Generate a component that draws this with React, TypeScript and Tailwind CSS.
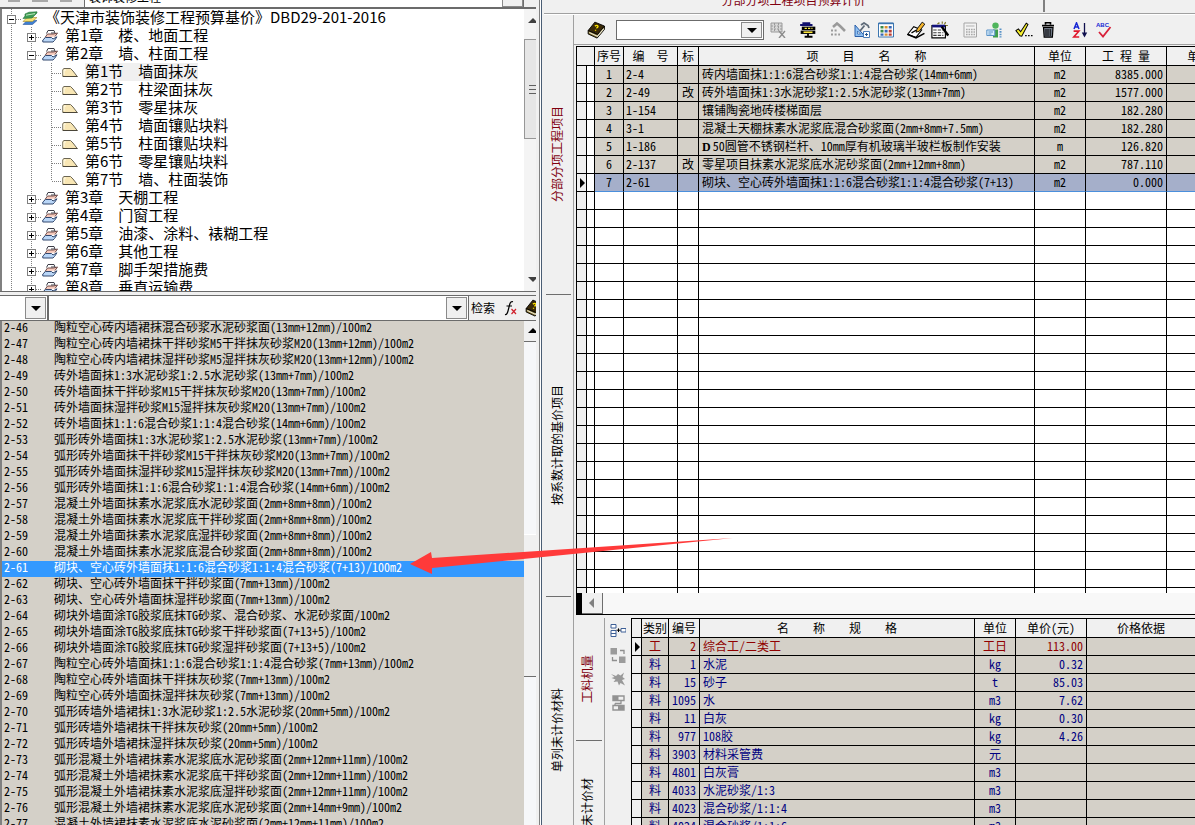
import type { ReactNode } from 'react'

type TreeNode = {
  level: 0 | 1 | 2
  label: string
  open?: boolean
  selected?: boolean
  last?: boolean
}

const tree: TreeNode[] = [
  { level: 0, label: '《天津市装饰装修工程预算基价》DBD29-201-2016', open: true },
  { level: 1, label: '第1章　楼、地面工程' },
  { level: 1, label: '第2章　墙、柱面工程', open: true },
  { level: 2, label: '第1节　墙面抹灰', selected: true },
  { level: 2, label: '第2节　柱梁面抹灰' },
  { level: 2, label: '第3节　零星抹灰' },
  { level: 2, label: '第4节　墙面镶贴块料' },
  { level: 2, label: '第5节　柱面镶贴块料' },
  { level: 2, label: '第6节　零星镶贴块料' },
  { level: 2, label: '第7节　墙、柱面装饰', last: true },
  { level: 1, label: '第3章　天棚工程' },
  { level: 1, label: '第4章　门窗工程' },
  { level: 1, label: '第5章　油漆、涂料、裱糊工程' },
  { level: 1, label: '第6章　其他工程' },
  { level: 1, label: '第7章　脚手架措施费' },
  { level: 1, label: '第8章　垂直运输费' },
]

const quotas: [string, string][] = [
  ['2-46', '陶粒空心砖内墙裙抹混合砂浆水泥砂浆面(13mm+12mm)/100m2'],
  ['2-47', '陶粒空心砖内墙裙抹干拌砂浆M5干拌抹灰砂浆M20(13mm+12mm)/100m2'],
  ['2-48', '陶粒空心砖内墙裙抹湿拌砂浆M5湿拌抹灰砂浆M20(13mm+12mm)/100m2'],
  ['2-49', '砖外墙面抹1:3水泥砂浆1:2.5水泥砂浆(13mm+7mm)/100m2'],
  ['2-50', '砖外墙面抹干拌砂浆M15干拌抹灰砂浆M20(13mm+7mm)/100m2'],
  ['2-51', '砖外墙面抹湿拌砂浆M15湿拌抹灰砂浆M20(13mm+7mm)/100m2'],
  ['2-52', '砖外墙面抹1:1:6混合砂浆1:1:4混合砂浆(14mm+6mm)/100m2'],
  ['2-53', '弧形砖外墙面抹1:3水泥砂浆1:2.5水泥砂浆(13mm+7mm)/100m2'],
  ['2-54', '弧形砖外墙面抹干拌砂浆M15干拌抹灰砂浆M20(13mm+7mm)/100m2'],
  ['2-55', '弧形砖外墙面抹湿拌砂浆M15湿拌抹灰砂浆M20(13mm+7mm)/100m2'],
  ['2-56', '弧形砖外墙面抹1:1:6混合砂浆1:1:4混合砂浆(14mm+6mm)/100m2'],
  ['2-57', '混凝土外墙面抹素水泥浆底水泥砂浆面(2mm+8mm+8mm)/100m2'],
  ['2-58', '混凝土外墙面抹素水泥浆底干拌砂浆面(2mm+8mm+8mm)/100m2'],
  ['2-59', '混凝土外墙面抹素水泥浆底湿拌砂浆面(2mm+8mm+8mm)/100m2'],
  ['2-60', '混凝土外墙面抹素水泥浆底混合砂浆面(2mm+8mm+8mm)/100m2'],
  ['2-61', '砌块、空心砖外墙面抹1:1:6混合砂浆1:1:4混合砂浆(7+13)/100m2'],
  ['2-62', '砌块、空心砖外墙面抹干拌砂浆面(7mm+13mm)/100m2'],
  ['2-63', '砌块、空心砖外墙面抹湿拌砂浆面(7mm+13mm)/100m2'],
  ['2-64', '砌块外墙面涂TG胶浆底抹TG砂浆、混合砂浆、水泥砂浆面/100m2'],
  ['2-65', '砌块外墙面涂TG胶浆底抹TG砂浆干拌砂浆面(7+13+5)/100m2'],
  ['2-66', '砌块外墙面涂TG胶浆底抹TG砂浆湿拌砂浆面(7+13+5)/100m2'],
  ['2-67', '陶粒空心砖外墙面抹1:1:6混合砂浆1:1:4混合砂浆(7mm+13mm)/100m2'],
  ['2-68', '陶粒空心砖外墙面抹干拌抹灰砂浆(7mm+13mm)/100m2'],
  ['2-69', '陶粒空心砖外墙面抹湿拌抹灰砂浆(7mm+13mm)/100m2'],
  ['2-70', '弧形砖墙外墙裙抹1:3水泥砂浆1:2.5水泥砂浆(20mm+5mm)/100m2'],
  ['2-71', '弧形砖墙外墙裙抹干拌抹灰砂浆(20mm+5mm)/100m2'],
  ['2-72', '弧形砖墙外墙裙抹湿拌抹灰砂浆(20mm+5mm)/100m2'],
  ['2-73', '弧形混凝土外墙裙抹素水泥浆底水泥砂浆面(2mm+12mm+11mm)/100m2'],
  ['2-74', '弧形混凝土外墙裙抹素水泥浆底干拌砂浆面(2mm+12mm+11mm)/100m2'],
  ['2-75', '弧形混凝土外墙裙抹素水泥浆底湿拌砂浆面(2mm+12mm+11mm)/100m2'],
  ['2-76', '弧形混凝土外墙裙抹素水泥浆底水泥砂浆面(2mm+14mm+9mm)/100m2'],
  ['2-77', '混凝土外墙裙抹素水泥浆底水泥砂浆面(2mm+12mm+11mm)/100m2'],
]

const items = [
  { no: '2-4', flag: '', name: '砖内墙面抹1:1:6混合砂浆1:1:4混合砂浆(14mm+6mm)', unit: 'm2', qty: '8385.000' },
  { no: '2-49', flag: '改', name: '砖外墙面抹1:3水泥砂浆1:2.5水泥砂浆(13mm+7mm)', unit: 'm2', qty: '1577.000' },
  { no: '1-154', flag: '', name: '镶铺陶瓷地砖楼梯面层', unit: 'm2', qty: '182.280' },
  { no: '3-1', flag: '', name: '混凝土天棚抹素水泥浆底混合砂浆面(2mm+8mm+7.5mm)', unit: 'm2', qty: '182.280' },
  { no: '1-186', flag: '', bold: 'D', name: '50圆管不锈钢栏杆、10mm厚有机玻璃半玻栏板制作安装', unit: 'm', qty: '126.820' },
  { no: '2-137', flag: '改', name: '零星项目抹素水泥浆底水泥砂浆面(2mm+12mm+8mm)', unit: 'm2', qty: '787.110' },
  { no: '2-61', flag: '', name: '砌块、空心砖外墙面抹1:1:6混合砂浆1:1:4混合砂浆(7+13)', unit: 'm2', qty: '0.000', selected: true },
]

const emptyRows = Array.from({ length: 23 }, (_, i) => i)

const materials = [
  ['工', '2', '综合工/二类工', '工日', '113.00'],
  ['料', '1', '水泥', 'kg', '0.32'],
  ['料', '15', '砂子', 't', '85.03'],
  ['料', '1095', '水', 'm3', '7.62'],
  ['料', '11', '白灰', 'kg', '0.30'],
  ['料', '977', '108胶', 'kg', '4.26'],
  ['料', '3903', '材料采管费', '元', ''],
  ['料', '4801', '白灰膏', 'm3', ''],
  ['料', '4033', '水泥砂浆/1:3', 'm3', ''],
  ['料', '4023', '混合砂浆/1:1:4', 'm3', ''],
  ['料', '4024', '混合砂浆/1:1:6', 'm3', ''],
]

/* ---------- icons ---------- */

function Svg({ children, size = 'w-4 h-4' }: { children: ReactNode; size?: string }) {
  return (
    <svg className={`${size} shrink-0`} viewBox="0 0 16 16" fill="none" aria-hidden="true">
      {children}
    </svg>
  )
}

const RootIcon = () => (
  <Svg>
    <path d="M1 14.5 L5 10.5 H15 L10.5 14.5Z" fill="#3f7fd0" stroke="#28569c" strokeWidth=".6" />
    <path d="M1 11.5 L5 7.5 H15 L10.5 11.5Z" fill="#f6e071" stroke="#a08a2c" strokeWidth=".6" />
    <path d="M1 8.5 L3 6 V4 L7 2.2 L15 1.8 V3 L12 6 L10 8Z" fill="#3d9c52" stroke="#25713a" strokeWidth=".6" />
    <path d="M4 5.2 L13 3.6" stroke="#bfe6c0" />
  </Svg>
)

const ChapterIcon = () => (
  <Svg>
    <path d="M4.5 5.5 L6 2.5 H12 L13 5 H9" fill="#fff" stroke="#3c3c46" />
    <path d="M3 9.5 L5.5 6 H11.5 L15.5 5 L13 8.5" fill="#f6c9bb" stroke="#6d4b49" />
    <path d="M.8 14 V12 L3.5 9.5 H9.5 L11 11 L15 8.8 L12.5 12.5 L11 14Z" fill="#b9d6f7" stroke="#32486e" />
  </Svg>
)

const LeafIcon = () => (
  <Svg>
    <path d="M.8 12.5 V5.5 L2 4.5 H8.5 L11 7 L15.2 12.5Z" fill="#f8e6b4" stroke="#6b6552" />
    <path d="M2 11 V6 H4" stroke="#fffbe6" />
    <path d="M1 12.5 H15.5" stroke="#4a4538" />
  </Svg>
)

const BookIcon = () => (
  <Svg size="w-[18px] h-[18px]">
    <path d="M1 8.5 L7 1 L15.5 4.5 L9.5 12Z" fill="#3b2a08" stroke="#000" strokeWidth=".8" />
    <path d="M1 8.5 V11.5 L9 15.2 L15.5 7.5 V4.5 L9.5 12Z" fill="#7a641c" stroke="#000" strokeWidth=".8" />
    <path d="M2 10.3 L9.2 13.6 L15 6.7" stroke="#e9e6d4" />
    <path d="M7 4.6 Q9 3.2 9.8 4.7 Q9.8 5.8 8.3 6.4 M7.6 7.8 V8.6" stroke="#ffe400" strokeWidth="1.2" />
  </Svg>
)

const GridDeleteIcon = () => (
  <Svg>
    <path d="M1 1h11v9H1z" fill="#d8d8d8" stroke="#9a9a9a" />
    <path d="M1 4h11M1 7h11M4.5 1v9M8.5 1v9" stroke="#9a9a9a" strokeDasharray="2 1" />
    <path d="M9 9 L15 16 M15 9 L9 16" stroke="#8c8c8c" strokeWidth="1.4" />
  </Svg>
)

const StackIcon = () => (
  <Svg size="w-[18px] h-[18px]">
    <path d="M1 3.5h11M3 2h7" stroke="#10106e" strokeWidth="1.8" />
    <path d="M2.5 6.5h12" stroke="#000" strokeWidth="3" />
    <path d="M5 6.5h7" stroke="#fff04a" strokeDasharray="2 1" />
    <path d="M1.5 10h13" stroke="#000" strokeWidth="3" />
    <path d="M4 10h8" stroke="#ffe83a" strokeWidth="1.4" />
    <path d="M8 11v3.5M5 14h7" stroke="#000" strokeWidth="1.6" />
  </Svg>
)

const ToolGrayIcon = () => (
  <Svg>
    <path d="M3 5 L7 1.5 L10 4 L15 9" stroke="#9a9a9a" strokeWidth="2.6" />
    <path d="M1 8.5h7M1 12.5h9" stroke="#9a9a9a" strokeWidth="2" strokeDasharray="2 1.6" />
  </Svg>
)

const HammerIcon = () => (
  <Svg>
    <path d="M1 3 V14.5 H11Z" fill="#8fc0f2" stroke="#2a5ea8" />
    <path d="M3.5 9 V12 H6.5Z" fill="#fff" stroke="#2a5ea8" strokeWidth=".7" />
    <path d="M7 3 L10 1 L14 3.5 L15 6 M10.5 3.5 L6 9" stroke="#5e6a78" strokeWidth="1.8" />
    <path d="M9.5 9.5h6v6h-6z" fill="#fff" stroke="#4b7db8" />
    <path d="M11 12.5h3M12.5 11v3" stroke="#26558f" />
  </Svg>
)

const PaletteIcon = () => (
  <Svg>
    <path d="M.5 1h15v14H.5z" fill="#fff" stroke="#3c76b0" />
    <path d="M1 1.5h14" stroke="#3c76b0" strokeWidth="1.4" />
    <path d="M2.5 4h3v2.6h-3zM2.5 7.8h3v2.6h-3z" fill="#3d8a4a" />
    <path d="M6.6 4h3v2.6h-3zM6.6 11.4h3v2.4h-3z" fill="#d9902f" />
    <path d="M10.7 4h3v2.6h-3zM6.6 7.8h3v2.6h-3zM2.5 11.4h3v2.4h-3z" fill="#3867b5" />
    <path d="M10.7 7.8h3v2.6h-3zM10.7 11.4h3v2.4h-3z" fill="#b93d34" />
  </Svg>
)

const PencilIcon = () => (
  <Svg size="w-[18px] h-[18px]">
    <path d="M.5 12 L6 5 L13 8 L8 14.5Z" fill="#fff" stroke="#000" />
    <path d="M1 12 L8 15 L15.5 11" stroke="#000" strokeWidth="1.4" />
    <path d="M4 10.5 L8.5 8" stroke="#000" strokeWidth="1.2" />
    <path d="M8 10 L9 7 L13.5 1 L15.8 2.8 L11 9Z" fill="#f4b52c" stroke="#000" strokeWidth=".8" />
  </Svg>
)

const WandTableIcon = () => (
  <Svg size="w-[18px] h-[18px]">
    <path d="M.8 4h12v11H.8z" fill="#fff" stroke="#000" />
    <path d="M1 4.5h11.5" stroke="#12127c" strokeWidth="2.4" />
    <path d="M2 8h9M2 10.4h9M2 12.8h9" stroke="#3a3a3a" strokeDasharray="3 1" />
    <path d="M9.5 5 L15.3 13" stroke="#000" strokeWidth="2.2" />
    <path d="M7 1v1.6M10 .5v2M13 1l-1 2M15 4h-2M5.5 2.4h1" stroke="#7b7420" />
  </Svg>
)

const CalculatorIcon = () => (
  <Svg>
    <path d="M2 1h12.5v14H2z" fill="#f3f3f3" stroke="#a5a5a5" />
    <path d="M4 3h8.5v2H4z" fill="#d2d2d2" />
    <path d="M4 7.5h9M4 10h9M4 12.5h9" stroke="#a8a8a8" strokeWidth="1.3" strokeDasharray="1.6 .9" />
  </Svg>
)

const PersonIcon = () => (
  <Svg>
    <circle cx="9.5" cy="3.6" r="3.2" fill="#4fb55c" />
    <path d="M7 7.5h5v8H7z" fill="#3f9e4c" />
    <path d="M.8 8h8v5.5h-8z" fill="#d9ecfb" stroke="#5a93c8" />
    <path d="M2.4 10h4.6M2.4 12h3" stroke="#5a93c8" />
    <path d="M14.5 6.5v9" stroke="#5a93c8" strokeWidth="2" strokeDasharray="1.6 1" />
  </Svg>
)

const CheckDotsIcon = () => (
  <Svg size="w-[18px] h-[18px]">
    <path d="M.8 8.6 L3 7 L5 9.5 L10 2 L11.5 3 L6 13.5 L4.4 13.2Z" fill="#f7f02e" stroke="#000" strokeWidth=".9" />
    <path d="M9 13h1.4M11.6 13H13M14.2 13h1.4" stroke="#000" strokeWidth="1.3" />
  </Svg>
)

const TrashIcon = () => (
  <Svg>
    <path d="M5.5 2.4V.8h5v1.6M2 3.6h12" stroke="#000" strokeWidth="1.6" />
    <path d="M3.5 5.5h9.5l-.6 9.7H4.2z" fill="#6f7785" stroke="#000" strokeWidth="1.2" />
    <path d="M6 7v7M8 7v7M10.2 7v7" stroke="#000" />
  </Svg>
)

const SortIcon = () => (
  <Svg>
    <path d="M2 7 L4.5 .8 L7 7 M3 5h3" stroke="#1727d4" strokeWidth="1.5" />
    <path d="M1.6 9.2h5.2L1.8 15h5.4" stroke="#e0182c" strokeWidth="1.7" />
    <path d="M12.5 1v11" stroke="#10104e" strokeWidth="1.3" />
    <path d="M9.8 10.5h5.4L12.5 15.5Z" fill="#10104e" />
  </Svg>
)

const SpellIcon = () => (
  <Svg>
    <text x="0" y="5" fontSize="6" fontWeight="700" fontFamily="Liberation Sans, sans-serif" fill="#1727d4">
      ABC
    </text>
    <path d="M3 10 L7 14.5 L14.5 5" stroke="#d8213a" strokeWidth="1.8" />
  </Svg>
)

const InsertNodeIcon = () => (
  <Svg>
    <path d="M1 1.5h5v3.5H1zM1 7.5h5v6H1zM1 10.5h5M11 5.5h5v3.5h-5z" fill="#fff" stroke="#3d5f96" />
    <path d="M6.5 7.2h4M8.5 5.4v3.6" stroke="#000" />
  </Svg>
)

const SwapIcon = () => (
  <Svg>
    <path d="M.5 1h6.5v6.5H.5zM9 9.5h6.5V16H9z" fill="#9b9b9b" />
    <path d="M10 3.5h4v3.5M2.5 10v3.5H7" stroke="#8f8f8f" strokeWidth="1.3" />
  </Svg>
)

const BurstIcon = () => (
  <Svg>
    <path d="M1 3 L6 5 L8 3 L10.5 4.5 L14 1.5 L12.5 6 L15 8 L12 9 L15 14.5 L10.5 12 L9 14.5 L7.5 10.5 L3.5 11 L5.5 8.5 L1.5 7 L4.5 6Z" fill="#999" />
  </Svg>
)

const LinkNodesIcon = () => (
  <Svg>
    <path d="M3 1h11v4.5H3zM3 10.5h11V15H3z" fill="#f0f0f0" stroke="#929292" strokeWidth="1.4" />
    <path d="M11 5.5v3M5 8.5h6.5M5 8.5v2" stroke="#929292" strokeWidth="1.3" />
    <path d="M3 1h5.5v4.5H3zM8 10.5h6V15H8z" fill="#929292" />
  </Svg>
)

const FxIcon = () => (
  <Svg>
    <path d="M2 14.5 Q4 15 5 11 L6.8 4 Q7.6 1 10 1.8 M3.5 6h5.5" stroke="#000" strokeWidth="1.2" />
    <path d="M8.5 9 L13 14 M13 9 L8.5 14" stroke="#d0202c" strokeWidth="1.2" />
  </Svg>
)

function Triangle({ dir, className = 'fill-black' }: { dir: 'up' | 'down' | 'left' | 'right'; className?: string }) {
  const shapes = { up: '0,7 5,2 10,7', down: '0,3 10,3 5,8', left: '7,0 2,5 7,10', right: '3,0 8,5 3,10' }
  return (
    <svg className={`w-[10px] h-[10px] shrink-0 ${className}`} viewBox="0 0 10 10" aria-hidden="true">
      <polygon points={shapes[dir]} />
    </svg>
  )
}

/* ---------- small controls ---------- */

function Combo({ label, className }: { label: string; className: string }) {
  return (
    <div className={`relative bg-white ${className}`}>
      <select aria-label={label} className="block w-full h-full appearance-none bg-white outline-none">
        <option></option>
      </select>
      <span className="absolute right-px top-px bottom-px w-[21px] flex items-center justify-center bg-[#f0f0f0] border border-[#8a8a8a] pointer-events-none">
        <Triangle dir="down" />
      </span>
    </div>
  )
}

function ToolButton({ label, children }: { label: string; children: ReactNode }) {
  return (
    <button type="button" aria-label={label} className="w-5 h-5 shrink-0 flex items-center justify-center">
      {children}
    </button>
  )
}

function SideTab({ label, className, active = false }: { label: string; className: string; active?: boolean }) {
  return (
    <button
      type="button"
      role="tab"
      aria-selected={active}
      className={`w-full shrink-0 flex items-center justify-center border-b border-[#6e6e6e] pr-1 ${active ? 'text-[#80000f]' : 'text-black'} ${className}`}
    >
      <span className="[writing-mode:vertical-rl] [text-orientation:sideways] rotate-180 leading-4 whitespace-nowrap">{label}</span>
    </button>
  )
}

/* ---------- left pane ---------- */

function Guide({ up = true, down = true, branch = false, box }: { up?: boolean; down?: boolean; branch?: boolean; box?: 'plus' | 'minus' }) {
  return (
    <svg className="w-5 h-[18px] shrink-0" viewBox="0 0 20 18" fill="none" aria-hidden="true">
      <g stroke="#808080" strokeDasharray="1 1">
        {up && <path d="M9.5 0V10" />}
        {down && <path d="M9.5 10V18" />}
        {branch && <path d="M10 10.5H20" />}
      </g>
      {box && (
        <>
          <rect x="5.5" y="6.5" width="8" height="8" fill="#fff" stroke="#808080" />
          <path d={box === 'plus' ? 'M7 10.5h5M9.5 8v5' : 'M7 10.5h5'} stroke="#000" />
        </>
      )}
    </svg>
  )
}

function TreeRow({ node }: { node: TreeNode }) {
  const box = node.open ? 'minus' : 'plus'
  return (
    <li className="flex h-[18px]">
      <Guide branch={node.level === 0} box={node.level === 0 ? box : undefined} />
      {node.level > 0 && <Guide branch={node.level === 1} box={node.level === 1 ? box : undefined} />}
      {node.level === 2 && <Guide branch down={!node.last} />}
      <span className="w-[23px] shrink-0 self-center">
        {node.level === 0 ? <RootIcon /> : node.level === 1 ? <ChapterIcon /> : <LeafIcon />}
      </span>
      <a href="#" className={`h-[18px] text-[15px] leading-4 whitespace-nowrap ${node.selected ? 'bg-[#f0f0f0]' : ''}`}>
        {node.label}
      </a>
    </li>
  )
}

function LeftPane() {
  return (
    <aside className="w-[536px] shrink-0 flex flex-col overflow-hidden bg-[#f0f0f0]">
      {/* tail of the toolbar above the tree */}
      <div className="h-[7px] shrink-0 flex items-end overflow-hidden">
        <div className="w-[84px] shrink-0 flex self-start gap-3 pl-2">
          <span className="w-3 h-0.5 bg-[#a8a8a8]"></span>
          <span className="w-4 h-0.5 bg-[#a8a8a8]"></span>
          <span className="w-3 h-0.5 bg-[#a8a8a8]"></span>
        </div>
        <div className="w-[440px] shrink-0 flex justify-between items-end bg-white border-x border-[#6e6e6e] pl-1">
          <span className="leading-5">装饰装修工程</span>
          <span className="w-[21px] h-4 bg-[#f0f0f0] border border-[#8a8a8a]"></span>
        </div>
      </div>

      <div className="h-[285px] shrink-0 flex border-t-2 border-b border-[#6b6b6b] overflow-hidden">
        <ul className="w-[524px] shrink-0 overflow-hidden bg-white border-l-2 border-[#808080] [font-feature-settings:normal]">
          {tree.map((node) => (
            <TreeRow key={node.label} node={node} />
          ))}
        </ul>
        <div className="w-[17px] shrink-0 flex flex-col items-center bg-[#f4f4f4]">
          <div className="h-6 mb-1.5 flex items-center">
            <Triangle dir="up" className="fill-[#404040]" />
          </div>
          <div className="w-full h-[100px] flex flex-col items-center justify-center gap-[3px] bg-[#e6e6e6] border border-[#979797]">
            <span className="w-2 h-px bg-[#606060]"></span>
            <span className="w-2 h-px bg-[#606060]"></span>
            <span className="w-2 h-px bg-[#606060]"></span>
          </div>
          <div className="mt-auto h-6 flex items-center">
            <Triangle dir="down" className="fill-[#404040]" />
          </div>
        </div>
      </div>

      <div className="h-[26px] mt-[3px] shrink-0 flex items-center border-y border-[#6b6b6b]">
        <Combo label="类别" className="w-[49px] h-6 shrink-0 border-r-2 border-[#6b6b6b]" />
        <Combo label="检索内容" className="w-[420px] h-6 shrink-0 border-r border-[#6b6b6b]" />
        <button type="button" className="ml-0.5 shrink-0 leading-4">检索</button>
        <button type="button" aria-label="公式" className="ml-2 w-5 shrink-0">
          <FxIcon />
        </button>
        <button type="button" aria-label="帮助" className="ml-0.5 w-5 shrink-0">
          <BookIcon />
        </button>
      </div>

      <div className="flex-1 min-h-0 flex overflow-hidden">
        <ul className="w-[524px] shrink-0 overflow-hidden bg-[#d4d0c8] border-l-2 border-[#808080]">
          {quotas.map(([code, name]) => (
            <li
              key={code}
              className={`flex h-4 pl-0.5 leading-[11px] whitespace-nowrap ${code === '2-61' ? 'bg-[#3399ff] text-white' : ''}`}
            >
              <span className="w-[50px] shrink-0">{code}</span>
              <span>{name}</span>
            </li>
          ))}
        </ul>
        <div className="w-[17px] shrink-0 flex flex-col bg-[#f6f7f9]">
          <div className="h-[21px] flex items-center justify-center bg-[#f0f0f0] border-b border-[#6e6e6e]">
            <Triangle dir="up" />
          </div>
          <div className="mt-[192px] h-[143px] bg-[#f0f0f0] border-t border-t-white border-b border-b-[#6e6e6e]"></div>
        </div>
      </div>
    </aside>
  )
}

/* ---------- right pane ---------- */

function Toolbar() {
  return (
    <div className="h-[30px] shrink-0 flex items-center gap-2.5 pl-3 border-b border-[#a0a0a0] overflow-hidden">
      <ToolButton label="定额本"><BookIcon /></ToolButton>
      <div className="flex items-center gap-1">
        <Combo label="定额查询" className="w-[148px] h-5 border border-[#6b6b6b]" />
        <ToolButton label="删除表格"><GridDeleteIcon /></ToolButton>
      </div>
      <ToolButton label="堆叠"><StackIcon /></ToolButton>
      <div className="flex gap-1">
        <ToolButton label="工具"><ToolGrayIcon /></ToolButton>
        <ToolButton label="换算"><HammerIcon /></ToolButton>
        <ToolButton label="颜色"><PaletteIcon /></ToolButton>
      </div>
      <div className="flex gap-1">
        <ToolButton label="编辑"><PencilIcon /></ToolButton>
        <ToolButton label="向导"><WandTableIcon /></ToolButton>
      </div>
      <div className="flex gap-1">
        <ToolButton label="计算器"><CalculatorIcon /></ToolButton>
        <ToolButton label="人员"><PersonIcon /></ToolButton>
      </div>
      <div className="flex gap-1">
        <ToolButton label="确认"><CheckDotsIcon /></ToolButton>
        <ToolButton label="删除"><TrashIcon /></ToolButton>
      </div>
      <div className="flex gap-1 pl-0.5">
        <ToolButton label="排序"><SortIcon /></ToolButton>
        <ToolButton label="检查"><SpellIcon /></ToolButton>
      </div>
    </div>
  )
}

const cell = 'h-[18px] p-0 align-top border-r border-b border-black overflow-hidden whitespace-nowrap leading-[15px]'
const head = 'h-[19px] p-0 border-r border-b border-black bg-[#f0f0f0] overflow-hidden whitespace-nowrap font-normal leading-4'
const wideHead = `${head} [font-feature-settings:normal]`

function ItemTable() {
  return (
    <div className="h-[547px] shrink-0 ml-0.5 mt-px border-t border-l border-black bg-white overflow-hidden">
      <table className="w-[calc(100%+52px)] table-fixed border-separate border-spacing-0">
        <colgroup>
          <col className="w-[10px]" />
          <col className="w-[8px]" />
          <col className="w-[29px]" />
          <col className="w-[54px]" />
          <col className="w-[21px]" />
          <col />
          <col className="w-[51px]" />
          <col className="w-[81px]" />
          <col className="w-[80px]" />
        </colgroup>
        <thead>
          <tr>
            <th colSpan={2} className={head}></th>
            <th className={head}>序号</th>
            <th className={wideHead}>编　号</th>
            <th className={head}>标</th>
            <th className={wideHead}>项　　目　　名　　称</th>
            <th className={head}>单位</th>
            <th className={head}>工 程 量</th>
            <th className={wideHead}>单　 价</th>
          </tr>
        </thead>
        <tbody>
          {items.map((item, i) => {
            const tone = item.selected ? 'bg-[#a5afca] border-b-[#4a8fdc]' : 'bg-[#d4d0c8]'
            return (
              <tr key={item.no}>
                <td className={`${cell} bg-[#f0f0f0]`}>{item.selected && <Triangle dir="right" className="mt-1" />}</td>
                <td className={cell}></td>
                <td className={`${cell} ${tone} text-center`}>{i + 1}</td>
                <td className={`${cell} ${tone} pl-0.5`}>{item.no}</td>
                <td className={`${cell} ${tone} text-center`}>{item.flag}</td>
                <td className={`${cell} ${tone} pl-[3px]`}>
                  {item.bold && <b className="font-['Liberation_Serif',serif] mr-0.5">{item.bold}</b>}
                  {item.name}
                </td>
                <td className={`${cell} ${tone} text-center`}>{item.unit}</td>
                <td className={`${cell} ${tone} pr-[3px] text-right`}>{item.qty}</td>
                <td className={`${cell} ${tone}`}></td>
              </tr>
            )
          })}
          {emptyRows.map((n) => (
            <tr key={n}>
              <td className={`${cell} bg-[#f0f0f0]`}></td>
              <td className={cell}></td>
              <td className={cell}></td>
              <td className={cell}></td>
              <td className={cell}></td>
              <td className={cell}></td>
              <td className={cell}></td>
              <td className={cell}></td>
              <td className={cell}></td>
            </tr>
          ))}
        </tbody>
      </table>
    </div>
  )
}

function MaterialTable() {
  return (
    <div className="flex-1 min-w-0 mt-[3px] border-t border-l border-black bg-[#d4d0c8] overflow-hidden">
      <table className="w-[calc(100%+1px)] table-fixed border-separate border-spacing-0">
        <colgroup>
          <col className="w-[10px]" />
          <col className="w-[27px]" />
          <col className="w-[31px]" />
          <col />
          <col className="w-[41px]" />
          <col className="w-[71px]" />
          <col className="w-[109px]" />
        </colgroup>
        <thead>
          <tr>
            <th className={head}></th>
            <th className={head}>类别</th>
            <th className={head}>编号</th>
            <th className={wideHead}>名　　称　　规　　格</th>
            <th className={head}>单位</th>
            <th className={head}>单价(元)</th>
            <th className={head}>价格依据</th>
          </tr>
        </thead>
        <tbody>
          {materials.map(([kind, no, name, unit, price], i) => (
            <tr key={no} className={kind === '工' ? 'text-[#900000]' : 'text-[#000080]'}>
              <td className={`${cell} bg-[#f0f0f0]`}>{i === 0 && <Triangle dir="right" className="mt-1" />}</td>
              <td className={`${cell} text-center`}>{kind}</td>
              <td className={`${cell} pr-[3px] text-right`}>{no}</td>
              <td className={`${cell} pl-[3px]`}>{name}</td>
              <td className={`${cell} text-center`}>{unit}</td>
              <td className={`${cell} pr-[3px] text-right`}>{price}</td>
              <td className={cell}></td>
            </tr>
          ))}
        </tbody>
      </table>
    </div>
  )
}

function RightPane() {
  return (
    <main className="flex-1 min-w-0 flex flex-col overflow-hidden bg-[#f0f0f0]">
      <div className="h-[14px] shrink-0 flex items-start border-b border-[#a0a0a0] overflow-hidden">
        <button type="button" className="w-[501px] h-3 shrink-0 flex items-end justify-center border-r-2 border-[#808080] text-[#80000f]">
          <span className="h-3 leading-[0px]">分部分项工程项目预算计价</span>
        </button>
      </div>

      <div className="flex-1 min-h-0 flex border-t border-white">
        <div role="tablist" className="w-[30px] shrink-0 flex flex-col px-0.5 border-r border-[#a0a0a0] overflow-hidden">
          <SideTab label="分部分项工程项目" className="h-[280px]" active />
          <SideTab label="按系数计取的基价项目" className="h-[302px]" />
          <SideTab label="单列未计价材料" className="h-[268px]" />
        </div>

        <div className="flex-1 min-w-0 flex flex-col">
          <Toolbar />
          <ItemTable />
          <div className="h-[22px] ml-0.5 shrink-0 flex bg-[#f8f8f8] border-b border-black">
            <span className="w-1.5 bg-black"></span>
            <button type="button" aria-label="向左滚动" className="w-[21px] flex items-center justify-center bg-[#f0f0f0] border-r border-b border-[#6e6e6e]">
              <Triangle dir="left" className="fill-[#808080]" />
            </button>
          </div>

          <div className="flex-1 min-h-0 flex overflow-hidden">
            <div role="tablist" className="w-[31px] shrink-0 flex flex-col pl-0.5 pr-0.5 mt-[3px] border-r border-[#a0a0a0] overflow-hidden">
              <SideTab label="工料机量" className="h-[123px]" active />
              <SideTab label="未计价材" className="h-[123px]" />
            </div>
            <div className="w-[26px] shrink-0 flex flex-col items-center gap-1 pt-1.5">
              <ToolButton label="插入"><InsertNodeIcon /></ToolButton>
              <ToolButton label="替换"><SwapIcon /></ToolButton>
              <ToolButton label="分解"><BurstIcon /></ToolButton>
              <ToolButton label="关联"><LinkNodesIcon /></ToolButton>
            </div>
            <MaterialTable />
          </div>
        </div>
      </div>
    </main>
  )
}

export default function App() {
  return (
    <div
      lang="zh-CN"
      className="relative h-screen flex overflow-hidden bg-[#f0f0f0] text-black text-[12px] font-['Noto_Sans_CJK_SC',sans-serif] [font-feature-settings:'hwid']"
    >
      <LeftPane />
      <div className="w-2 shrink-0 pl-[3px]">
        <div className="w-[3px] h-full bg-white border-l border-l-[#808080] border-r border-r-[#4a5d74]"></div>
      </div>
      <RightPane />

      {/* arrow pointing at the chosen quota */}
      <svg className="absolute left-[410px] top-[536px] w-[324px] h-10 pointer-events-none" viewBox="0 0 324 40" aria-hidden="true">
        <polygon points="0,28 21,16 22,22 323,2 22,32 22,38" fill="#ff3a3a" />
      </svg>
    </div>
  )
}
